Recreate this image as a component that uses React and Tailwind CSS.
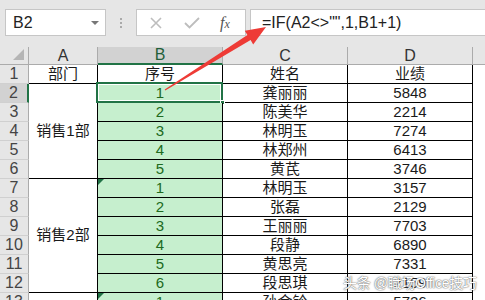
import React from "react";

const font = { fontFamily: '"Liberation Sans", "Noto Sans CJK SC", sans-serif' };

const sales1 = [
  ["1", "龚丽丽", "5848"],
  ["2", "陈美华", "2214"],
  ["3", "林明玉", "7274"],
  ["4", "林郑州", "6413"],
  ["5", "黄芪", "3746"],
];

const sales2 = [
  ["1", "林明玉", "3157"],
  ["2", "张磊", "2129"],
  ["3", "王丽丽", "7703"],
  ["4", "段静", "6890"],
  ["5", "黄思亮", "7331"],
  ["6", "段思琪", "2159"],
];

const cell = "flex items-center justify-center border-b border-r border-black text-[#1a1a1a]";
const colHead = "flex items-center justify-center border-b border-r border-[#ababab] bg-[#e6e6e6] text-[16px] text-[#333]";

function RowHead({ n, active }) {
  return (
    <div
      className={
        "col-start-1 flex items-center justify-center border-b border-[#d0d0d0] text-[16px] text-[#444] " +
        (active
          ? "bg-[#d2d2d2] border-r-2 border-r-[#217346]"
          : "bg-[#e6e6e6] border-r border-r-[#ababab]")
      }
    >
      {n}
    </div>
  );
}

// green error triangle in the top-left corner of a cell
function ErrMark() {
  return (
    <span className="absolute left-0 top-0 h-0 w-0 border-t-[6px] border-r-[6px] border-t-[#217346] border-r-transparent" />
  );
}

function Row({ n, seq, name, score, active, mark }) {
  return (
    <>
      <RowHead n={n} active={active} />
      <div className="relative col-start-3 flex items-center justify-center border-b border-r border-black bg-[#c6efce] text-[#206a20]">
        {mark && <ErrMark />}
        {seq}
        {active && (
          <>
            <span className="absolute -left-[2px] -top-[2px] -right-px -bottom-px border-2 border-[#217346]">
              <span className="absolute inset-0 border border-white" />
            </span>
            <span className="absolute -bottom-[3px] -right-[3px] h-[5px] w-[5px] border border-white bg-[#217346]" />
          </>
        )}
      </div>
      <div className={cell}>{name}</div>
      <div className={cell}>{score}</div>
      <div className="bg-white" />
    </>
  );
}

export default function App() {
  return (
    <div className="relative h-[300px] w-[485px] overflow-hidden bg-white" style={font}>
      {/* name box + formula bar */}
      <div className="flex h-[47px] items-center bg-[#e6e6e6] pb-[2px] pl-[5px]">
        <div className="flex h-[27px] w-[101px] items-center justify-between border border-[#c6c6c6] bg-white pl-[7px] pr-[6px] text-[16px] text-[#222]">
          <span>B2</span>
          <span className="h-0 w-0 border-x-[4px] border-t-[4px] border-x-transparent border-t-[#777]" />
        </div>
        <div className="mx-[14px] flex flex-col gap-[2px]">
          <span className="h-[2px] w-[2px] bg-[#aaa]" />
          <span className="h-[2px] w-[2px] bg-[#aaa]" />
          <span className="h-[2px] w-[2px] bg-[#aaa]" />
        </div>
        <div className="flex h-[27px] w-[110px] items-center border border-[#c6c6c6] bg-white pl-[12px]">
          <svg width="14" height="14" viewBox="0 0 14 14" className="stroke-[#bdbdbd]" strokeWidth="1.6">
            <path d="M2 2l10 10M12 2L2 12" />
          </svg>
          <svg width="16" height="14" viewBox="0 0 16 14" className="ml-[21px] fill-none stroke-[#bdbdbd]" strokeWidth="1.8">
            <path d="M1 7l4.5 4.5L15 2" />
          </svg>
          <span
            className="ml-[20px] text-[16px] italic text-[#555]"
            style={{ fontFamily: '"Liberation Serif", serif' }}
          >
            f<span className="text-[12px]">x</span>
          </span>
        </div>
        <div className="ml-[4px] flex h-[27px] flex-1 items-center border border-r-0 border-[#c6c6c6] bg-white pl-[11px] text-[16px] text-[#222]">
          =IF(A2&lt;&gt;"",1,B1+1)
        </div>
      </div>

      {/* sheet */}
      <div className="grid grid-cols-[29px_69px_125px_125px_125px_1fr] grid-rows-[18px] auto-rows-[19px] text-[15px]">
        <div className="relative border-b border-r border-[#ababab] bg-[#e6e6e6]">
          <span className="absolute bottom-[4px] right-[4px] h-0 w-0 border-b-[11px] border-l-[11px] border-b-[#b5b5b5] border-l-transparent" />
        </div>
        <div className={colHead}>A</div>
        <div className="flex items-center justify-center border-b-2 border-r border-b-[#217346] border-r-[#ababab] bg-[#d2d2d2] text-[16px] text-[#1f5f3a]">
          B
        </div>
        <div className={colHead}>C</div>
        <div className={colHead}>D</div>
        <div className="border-b border-[#ababab] bg-[#e6e6e6]" />

        <RowHead n="1" />
        <div className={cell}>部门</div>
        <div className={cell}>序号</div>
        <div className={cell}>姓名</div>
        <div className={cell}>业绩</div>
        <div />

        {/* merged department cells */}
        <div className={"col-start-2 row-start-3 row-span-5 " + cell}>销售1部</div>
        <div className={"col-start-2 row-start-8 row-span-6 " + cell}>销售2部</div>
        <div className="col-start-2 row-start-14 border-r border-black" />

        {sales1.map((r, i) => (
          <Row key={"a" + i} n={i + 2} seq={r[0]} name={r[1]} score={r[2]} active={i === 0} />
        ))}
        {sales2.map((r, i) => (
          <Row key={"b" + i} n={i + 7} seq={r[0]} name={r[1]} score={r[2]} mark={i === 0} />
        ))}
        <Row n={13} seq="1" name="孙金铃" score="5726" mark />
      </div>

      {/* red arrow pointing at the formula */}
      <svg className="pointer-events-none absolute left-0 top-0" width="485" height="300">
        <polygon
          points="165.3,90.4 250.6,40.1 253.2,44.4 266,27 244.8,30.8 247.4,35.1 164.7,89.6"
          fill="#ee3b36"
        />
      </svg>

      <div
        className="pointer-events-none absolute left-[343px] top-[273px] whitespace-nowrap text-[14px] tracking-tight text-white"
        style={{ textShadow: "0 0 1px #555, 0 0 2px #777" }}
      >
        头条 @職场Office技巧
      </div>
    </div>
  );
}
